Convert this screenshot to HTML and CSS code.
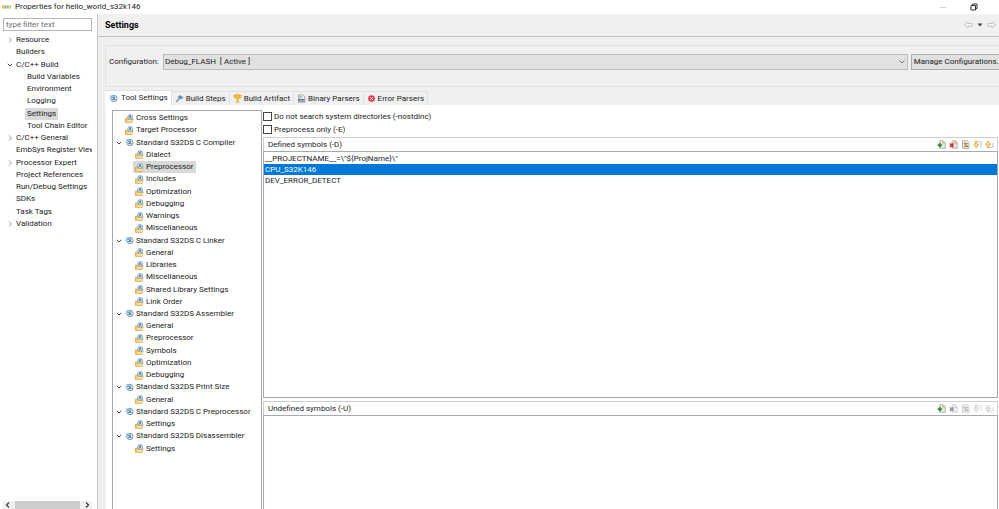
FILE: index.html
```
<!DOCTYPE html>
<html lang="en">
<head>
  <meta charset="UTF-8">
  <meta name="viewport" content="width=device-width, initial-scale=1.0">
  <title>Properties for hello_world_s32k146</title>
  <link rel="stylesheet" href="styles.css">
</head>
<body>
  <svg class="defs" aria-hidden="true">
    <symbol id="gear" viewBox="0 0 9 9">
      <path d="M1 1.5h3v1H1zM.5 3.5h2v1h-2z" fill="#8fb0c8"/>
      <circle cx="5" cy="4.5" r="3.2" fill="#d5e6ef" stroke="#7ea5be"/>
      <path d="M3 3l3.8 3M5.2 2v3.2M3 5.8l3-1" stroke="#356f96" stroke-width=".8" fill="none"/>
    </symbol>
    <symbol id="tool" viewBox="0 0 10 10">
      <path d="M.5 4.500h2l1 1h5.500l-1 3.800h-7.500z" fill="#f4c263" stroke="#d19a3c" stroke-width=".8"/>
      <path d="M1.500 8.600l1.400-2h6L8 8.600z" fill="#ffe3a1"/>
      <circle cx="5.800" cy="3.400" r="2.800" fill="#d4e4ec" stroke="#7fa3ba" stroke-width=".9"/>
      <path d="M4.200 2l3.200 2.900M6 1.200v2.500M4 4.500l2-.8" stroke="#39739b" stroke-width=".8"/>
    </symbol>
    <symbol id="down" viewBox="0 0 6 6"><path d="M.8 1.8L3 4l2.200-2.200" fill="none" stroke="#404040" stroke-width="1"/></symbol>
    <symbol id="right" viewBox="0 0 6 6"><path d="M2 .5L4.500 3 2 5.500" fill="none" stroke="#909090" stroke-width=".9"/></symbol>
    <symbol id="back" viewBox="0 0 9 8"><path d="M.7 4L4 1v1.600h4v2.800H4V7z" fill="#f8f8f8" stroke="#b4b4b4" stroke-width=".8"/></symbol>
    <symbol id="page" viewBox="0 0 9 9">
      <path d="M3 .8h3.400L8.300 2.700v5.600H3z" fill="#dfe9f4" stroke="#b0a88f" stroke-width=".8"/>
      <path d="M5.500.8l2.800 2.800H5.500z" fill="#e0ae50"/>
    </symbol>
    <symbol id="add" viewBox="0 0 9 9"><use href="#page"/><path d="M2.800 3v4.400M.6 5.200H5" stroke="#299334" stroke-width="1.800"/></symbol>
    <symbol id="delete" viewBox="0 0 9 9"><use href="#page"/><path d="M1 3.500l3.500 3.500M4.500 3.500L1 7" stroke="#d8202c" stroke-width="1.700"/></symbol>
    <symbol id="edit" viewBox="0 0 9 9"><path d="M1.500.8h4.800L8 2.500v5.800H1.500z" fill="#f4efe2" stroke="#aaa08a" stroke-width=".8"/><path d="M2.800 3.400h4M2.800 6.500h4" stroke="#7590a9"/><path d="M3 3l4 4" stroke="#bd872e" stroke-width="1.500"/></symbol>
    <symbol id="up" viewBox="0 0 9 9"><path d="M2.500 1h1.500v3h1.500L3.300 8 .7 4h1.800z" fill="#fbe49b" stroke="#d5a340" stroke-width=".8"/><path d="M5.500 1.400h1.500M8 1v6" stroke="#a8b6c4" stroke-width=".9"/></symbol>
    <symbol id="lower" viewBox="0 0 9 9"><path d="M3.200 1L5.700 4.500H4.300V8H2.300V4.500H.8z" fill="#fbe49b" stroke="#d5a340" stroke-width=".8"/><path d="M5.500 7.600h1.500M8 3v5" stroke="#a8b6c4" stroke-width=".9"/></symbol>
  </svg>

  <header class="titlebar">
    <svg class="logo" viewBox="0 0 9 4"><path d="M0 .5h3v3H0z" fill="#f6b13c"/><path d="M3 .5h3v3H3z" fill="#91b4ce"/><path d="M6 .5h3v3H6z" fill="#b5d23c"/><path d="M1 1l1.500 2M4 1l1.300 2M7 3V1h1" stroke="#fff" stroke-width=".4" fill="none"/></svg>
    <span>Properties for hello_world_s32k146</span>
    <div class="window-buttons">
      <svg width="8" height="8" viewBox="0 0 8 8"><path d="M1 4.500h6" stroke="#d0d0d0"/></svg>
      <svg width="8" height="8" viewBox="0 0 8 8"><path d="M1 2.500h4.500V7H1zM2.500 2.500V1H7v4.500H5.500" fill="none" stroke="#333"/></svg>
    </div>
  </header>

  <div class="dialog">
    <nav class="sidebar">
      <input class="filter" type="text" placeholder="type filter text" aria-label="Filter">
      <ul class="tree pages">
        <li><svg class="arrow"><use href="#right"/></svg><span>Resource</span></li>
        <li><span>Builders</span></li>
        <li><svg class="arrow"><use href="#down"/></svg><span>C/C++ Build</span></li>
        <li class="sub"><span>Build Variables</span></li>
        <li class="sub"><span>Environment</span></li>
        <li class="sub"><span>Logging</span></li>
        <li class="sub"><span class="current">Settings</span></li>
        <li class="sub"><span>Tool Chain Editor</span></li>
        <li><svg class="arrow"><use href="#right"/></svg><span>C/C++ General</span></li>
        <li><span>EmbSys Register View</span></li>
        <li><svg class="arrow"><use href="#right"/></svg><span>Processor Expert</span></li>
        <li><span>Project References</span></li>
        <li><span>Run/Debug Settings</span></li>
        <li><span>SDKs</span></li>
        <li><span>Task Tags</span></li>
        <li><svg class="arrow"><use href="#right"/></svg><span>Validation</span></li>
      </ul>
      <div class="scrollbar">
        <svg viewBox="0 0 8 8"><path d="M5.500 1.500L3 4l2.500 2.500" fill="none" stroke="#444" stroke-width="1.300"/></svg>
        <div class="thumb"></div>
        <svg viewBox="0 0 8 8"><path d="M2.500 1.500L5 4 2.500 6.500" fill="none" stroke="#444" stroke-width="1.300"/></svg>
      </div>
    </nav>

    <main class="content">
      <div class="heading">
        <h1>Settings</h1>
        <svg class="nav-icon"><use href="#back"/></svg>
        <svg class="nav-menu" viewBox="0 0 6 4"><path d="M.5.5h5L3 3.500z" fill="#444"/></svg>
        <svg class="nav-icon forward"><use href="#back"/></svg>
      </div>

      <div class="config">
        <label for="configuration">Configuration:</label>
        <div class="combo">
          <select id="configuration"><option>Debug_FLASH &nbsp;[ Active ]</option></select>
          <svg class="combo-arrow" viewBox="0 0 6 6"><path d="M.5 1.500L3 4l2.500-2.500" fill="none" stroke="#666" stroke-width=".9"/></svg>
        </div>
        <button type="button" class="manage">Manage Configurations...</button>
      </div>

      <div class="tabs">
        <button type="button" class="tab active"><svg><use href="#gear"/></svg>Tool Settings</button>
        <button type="button" class="tab"><svg viewBox="0 0 9 9"><path d="M1 8l4-4" stroke="#6f9bbd" stroke-width="1.600"/><path d="M3 2.500l2.500-1.500 1 1.500 2 .5L7 5H4z" fill="#6d8eaa"/></svg>Build Steps</button>
        <button type="button" class="tab"><svg viewBox="0 0 9 9"><path d="M2.500.8h4v3l-1 1.500h-2l-1-1.500z" fill="#f6bd3e" stroke="#f0ae30"/><path d="M2.500 1.500H.7l.5 2h1.500M6.500 1.500h1.800l-.5 2H6.500M4.500 5v3M2.500 8h4" fill="none" stroke="#e5a32b"/></svg>Build Artifact</button>
        <button type="button" class="tab"><svg viewBox="0 0 9 9"><path d="M1.500.8h4L8 3v5.200H1.500z" fill="#e8eef5" stroke="#a69a7b" stroke-width=".8"/><path d="M2.500 3h2M1 5.500h6.500M1 7h6.500" stroke="#526f99"/></svg>Binary Parsers</button>
        <button type="button" class="tab"><svg viewBox="0 0 9 9"><circle cx="4.500" cy="4.500" r="3.300" fill="#df3545"/><path d="M3.200 3.200l2.600 2.600M5.800 3.200L3.200 5.800" stroke="#fff"/></svg>Error Parsers</button>
      </div>

      <div class="tab-page">
        <ul class="tree tools">
          <li><svg class="icon"><use href="#tool"/></svg><span>Cross Settings</span></li>
          <li><svg class="icon"><use href="#tool"/></svg><span>Target Processor</span></li>
          <li><svg class="arrow"><use href="#down"/></svg><svg class="icon"><use href="#gear"/></svg><span>Standard S32DS C Compiler</span></li>
          <li class="sub"><svg class="icon"><use href="#tool"/></svg><span>Dialect</span></li>
          <li class="sub"><div class="current"><svg class="icon"><use href="#tool"/></svg><span>Preprocessor</span></div></li>
          <li class="sub"><svg class="icon"><use href="#tool"/></svg><span>Includes</span></li>
          <li class="sub"><svg class="icon"><use href="#tool"/></svg><span>Optimization</span></li>
          <li class="sub"><svg class="icon"><use href="#tool"/></svg><span>Debugging</span></li>
          <li class="sub"><svg class="icon"><use href="#tool"/></svg><span>Warnings</span></li>
          <li class="sub"><svg class="icon"><use href="#tool"/></svg><span>Miscellaneous</span></li>
          <li><svg class="arrow"><use href="#down"/></svg><svg class="icon"><use href="#gear"/></svg><span>Standard S32DS C Linker</span></li>
          <li class="sub"><svg class="icon"><use href="#tool"/></svg><span>General</span></li>
          <li class="sub"><svg class="icon"><use href="#tool"/></svg><span>Libraries</span></li>
          <li class="sub"><svg class="icon"><use href="#tool"/></svg><span>Miscellaneous</span></li>
          <li class="sub"><svg class="icon"><use href="#tool"/></svg><span>Shared Library Settings</span></li>
          <li class="sub"><svg class="icon"><use href="#tool"/></svg><span>Link Order</span></li>
          <li><svg class="arrow"><use href="#down"/></svg><svg class="icon"><use href="#gear"/></svg><span>Standard S32DS Assembler</span></li>
          <li class="sub"><svg class="icon"><use href="#tool"/></svg><span>General</span></li>
          <li class="sub"><svg class="icon"><use href="#tool"/></svg><span>Preprocessor</span></li>
          <li class="sub"><svg class="icon"><use href="#tool"/></svg><span>Symbols</span></li>
          <li class="sub"><svg class="icon"><use href="#tool"/></svg><span>Optimization</span></li>
          <li class="sub"><svg class="icon"><use href="#tool"/></svg><span>Debugging</span></li>
          <li><svg class="arrow"><use href="#down"/></svg><svg class="icon"><use href="#gear"/></svg><span>Standard S32DS Print Size</span></li>
          <li class="sub"><svg class="icon"><use href="#tool"/></svg><span>General</span></li>
          <li><svg class="arrow"><use href="#down"/></svg><svg class="icon"><use href="#gear"/></svg><span>Standard S32DS C Preprocessor</span></li>
          <li class="sub"><svg class="icon"><use href="#tool"/></svg><span>Settings</span></li>
          <li><svg class="arrow"><use href="#down"/></svg><svg class="icon"><use href="#gear"/></svg><span>Standard S32DS Disassembler</span></li>
          <li class="sub"><svg class="icon"><use href="#tool"/></svg><span>Settings</span></li>
        </ul>

        <div class="options">
          <label class="check"><input type="checkbox">Do not search system directories (-nostdinc)</label>
          <label class="check"><input type="checkbox">Preprocess only (-E)</label>

          <section class="symbols defined">
            <div class="symbols-head">
              <h2>Defined symbols (-D)</h2>
              <button type="button" aria-label="Add"><svg><use href="#add"/></svg></button>
              <button type="button" aria-label="Delete"><svg><use href="#delete"/></svg></button>
              <button type="button" aria-label="Edit"><svg><use href="#edit"/></svg></button>
              <button type="button" aria-label="Move up"><svg><use href="#up"/></svg></button>
              <button type="button" aria-label="Move down"><svg><use href="#lower"/></svg></button>
            </div>
            <ul class="symbols-list">
              <li>__PROJECTNAME__=\"${ProjName}\"</li>
              <li class="selected">CPU_S32K146</li>
              <li>DEV_ERROR_DETECT</li>
            </ul>
          </section>

          <section class="symbols undefined">
            <div class="symbols-head">
              <h2>Undefined symbols (-U)</h2>
              <button type="button" aria-label="Add"><svg><use href="#add"/></svg></button>
              <button type="button" aria-label="Delete" disabled><svg><use href="#delete"/></svg></button>
              <button type="button" aria-label="Edit" disabled><svg><use href="#edit"/></svg></button>
              <button type="button" aria-label="Move up" disabled><svg><use href="#up"/></svg></button>
              <button type="button" aria-label="Move down" disabled><svg><use href="#lower"/></svg></button>
            </div>
            <ul class="symbols-list"></ul>
          </section>
        </div>
      </div>
    </main>
  </div>
</body>
</html>
```
FILE: styles.css
```
* {
  box-sizing: border-box;
}
body {
  margin: 0;
  height: 100vh;
  display: flex;
  flex-direction: column;
  overflow: hidden;
  background: #fff;
  color: #1c1c1c;
  font: 8px/12px Roboto, "Noto Sans", sans-serif;
}
h1, h2, ul {
  margin: 0;
  padding: 0;
  list-style: none;
}
button, input, select {
  font: inherit;
  color: inherit;
}
svg {
  display: block;
  flex: none;
}
.defs {
  position: absolute;
  width: 0;
  height: 0;
}

/* title bar */
.titlebar {
  display: flex;
  align-items: center;
  height: 14px;
  flex: none;
  padding: 0 21px 0 2px;
}
.logo {
  width: 9px;
  height: 4px;
  margin-right: 4px;
}
.window-buttons {
  display: flex;
  gap: 23px;
  margin-left: auto;
}
.dialog {
  display: flex;
  flex: 1;
  min-height: 0;
}

/* page tree */
.sidebar {
  display: flex;
  flex-direction: column;
  flex: none;
  width: 98px;
  padding: 4px 5px 0 3px;
  border-right: 1px solid #c4c4c4;
}
.filter {
  width: 100%;
  height: 13px;
  padding: 0 2px;
  border: 1px solid #b4b4b4;
}
.filter::placeholder {
  color: #6d6d6d;
}
/* rows share the height of the tree evenly */
.tree {
  display: grid;
  grid-auto-rows: 1fr;
}
.tree li {
  display: flex;
  align-items: center;
  white-space: nowrap;
}
.pages {
  height: 196px;
  margin-top: 3px;
  overflow: hidden;
}
.pages li {
  padding-left: 13px;
}
.pages .sub {
  padding-left: 24px;
}
.arrow {
  width: 6px;
  height: 6px;
  margin-left: -9px;
  margin-right: 3px;
}
.current {
  display: flex;
  align-items: center;
  background: #d9d9d9;
  margin-left: -2px;
  padding: 0 2px;
}
.scrollbar {
  display: flex;
  align-items: center;
  gap: 3px;
  height: 8px;
  margin-top: auto;
  background: #f0f0f0;
}
.scrollbar svg {
  width: 9px;
  height: 8px;
}
.thumb {
  flex: 1;
  height: 8px;
  background: #cdcdcd;
}

/* settings page */
.content {
  display: flex;
  flex-direction: column;
  flex: 1;
  min-width: 0;
  overflow: hidden;
  background: #f0f0f0;
}
.heading {
  display: flex;
  align-items: center;
  height: 23px;
  flex: none;
  padding: 0 3px 0 7px;
  border-bottom: 1px solid #c0c0c0;
}
.heading h1 {
  flex: 1;
  font-size: 9px;
  font-weight: bold;
  color: #000;
}
.nav-icon {
  width: 9px;
  height: 8px;
}
.nav-menu {
  width: 6px;
  height: 4px;
  margin: 0 4px;
}
.forward {
  transform: scaleX(-1);
}
.config {
  display: flex;
  align-items: center;
  height: 42px;
  flex: none;
  margin: 8px -8px 3px 7px;
  padding: 0 0 8px 3px;
  border: 1px solid #e2e2e2;
}
.combo {
  position: relative;
  flex: 1;
  margin: 0 3px 0 4px;
}
.combo select {
  display: block;
  appearance: none;
  width: 100%;
  height: 16px;
  padding: 0 1px;
  border: 1px solid #bcbcbc;
  border-radius: 0;
  background: #e1e1e1;
}
.combo-arrow {
  position: absolute;
  right: 3px;
  top: 5px;
  width: 6px;
  height: 6px;
}
.manage {
  flex: none;
  height: 16px;
  padding: 0 2px;
  border: 1px solid #adadad;
  background: #e1e1e1;
}

/* tabs */
.tabs {
  display: flex;
  align-items: flex-end;
  height: 15px;
  flex: none;
  padding-left: 7px;
}
.tab {
  display: flex;
  align-items: center;
  gap: 2px;
  height: 14px;
  padding: 0 3px;
  border: 1px solid #e0e0e0;
  border-width: 1px 1px 0 0;
  background: #f0f0f0;
}
.tab svg {
  width: 9px;
  height: 9px;
}
.active {
  gap: 3px;
  height: 15px;
  padding: 0 3px 0 4px;
  background: #fff;
}
.tab-page {
  display: flex;
  flex: 1;
  min-height: 0;
  margin-left: 8px;
  padding: 5px 1px 0 6px;
  background: #fff;
}
.tools {
  flex: none;
  width: 150px;
  height: 345px;
  min-height: 100%;
  align-content: start;
  grid-auto-rows: auto;
  grid-template-rows: repeat(28, 49fr) 217fr;
  padding-top: 1px;
  border: 1px solid #a5a9b3;
  border-bottom: 0;
}
.tools li {
  padding-left: 12px;
}
.tools .sub {
  padding-left: 22px;
}
.icon {
  width: 9px;
  height: 9px;
  margin-right: 2px;
}

/* options */
.options {
  display: flex;
  flex-direction: column;
  flex: 1;
  min-width: 0;
  margin-left: 1px;
}
.check {
  display: flex;
  align-items: center;
  height: 13px;
  flex: none;
}
.check input {
  appearance: none;
  width: 9px;
  height: 9px;
  margin: 0 2px 0 0;
  border: 1px solid #444;
  background: #fff;
}
.symbols {
  display: flex;
  flex-direction: column;
}
.defined {
  height: 261px;
  flex: none;
  margin: 1px 0 3px;
}
.undefined {
  flex: 1;
}
.symbols-head {
  display: flex;
  align-items: center;
  gap: 3px;
  height: 14px;
  flex: none;
  padding: 0 3px 0 4px;
  border: 1px solid #cfcfcf;
  border-bottom: 0;
}
.symbols-head h2 {
  flex: 1;
  font-size: 8px;
  font-weight: normal;
}
.symbols-head button {
  padding: 0;
  border: 0;
  background: none;
}
.symbols-head button:disabled {
  filter: grayscale(1);
  opacity: .6;
}
.symbols-head svg {
  width: 9px;
  height: 9px;
}
.symbols-list {
  flex: 1;
  padding-top: 1px;
  border: 1px solid #a5a9b3;
}
.undefined .symbols-list {
  border-bottom: 0;
}
.symbols-list li {
  padding-left: 1px;
  line-height: 11px;
}
.selected {
  background: #0078d7;
  color: #fff;
}
```
